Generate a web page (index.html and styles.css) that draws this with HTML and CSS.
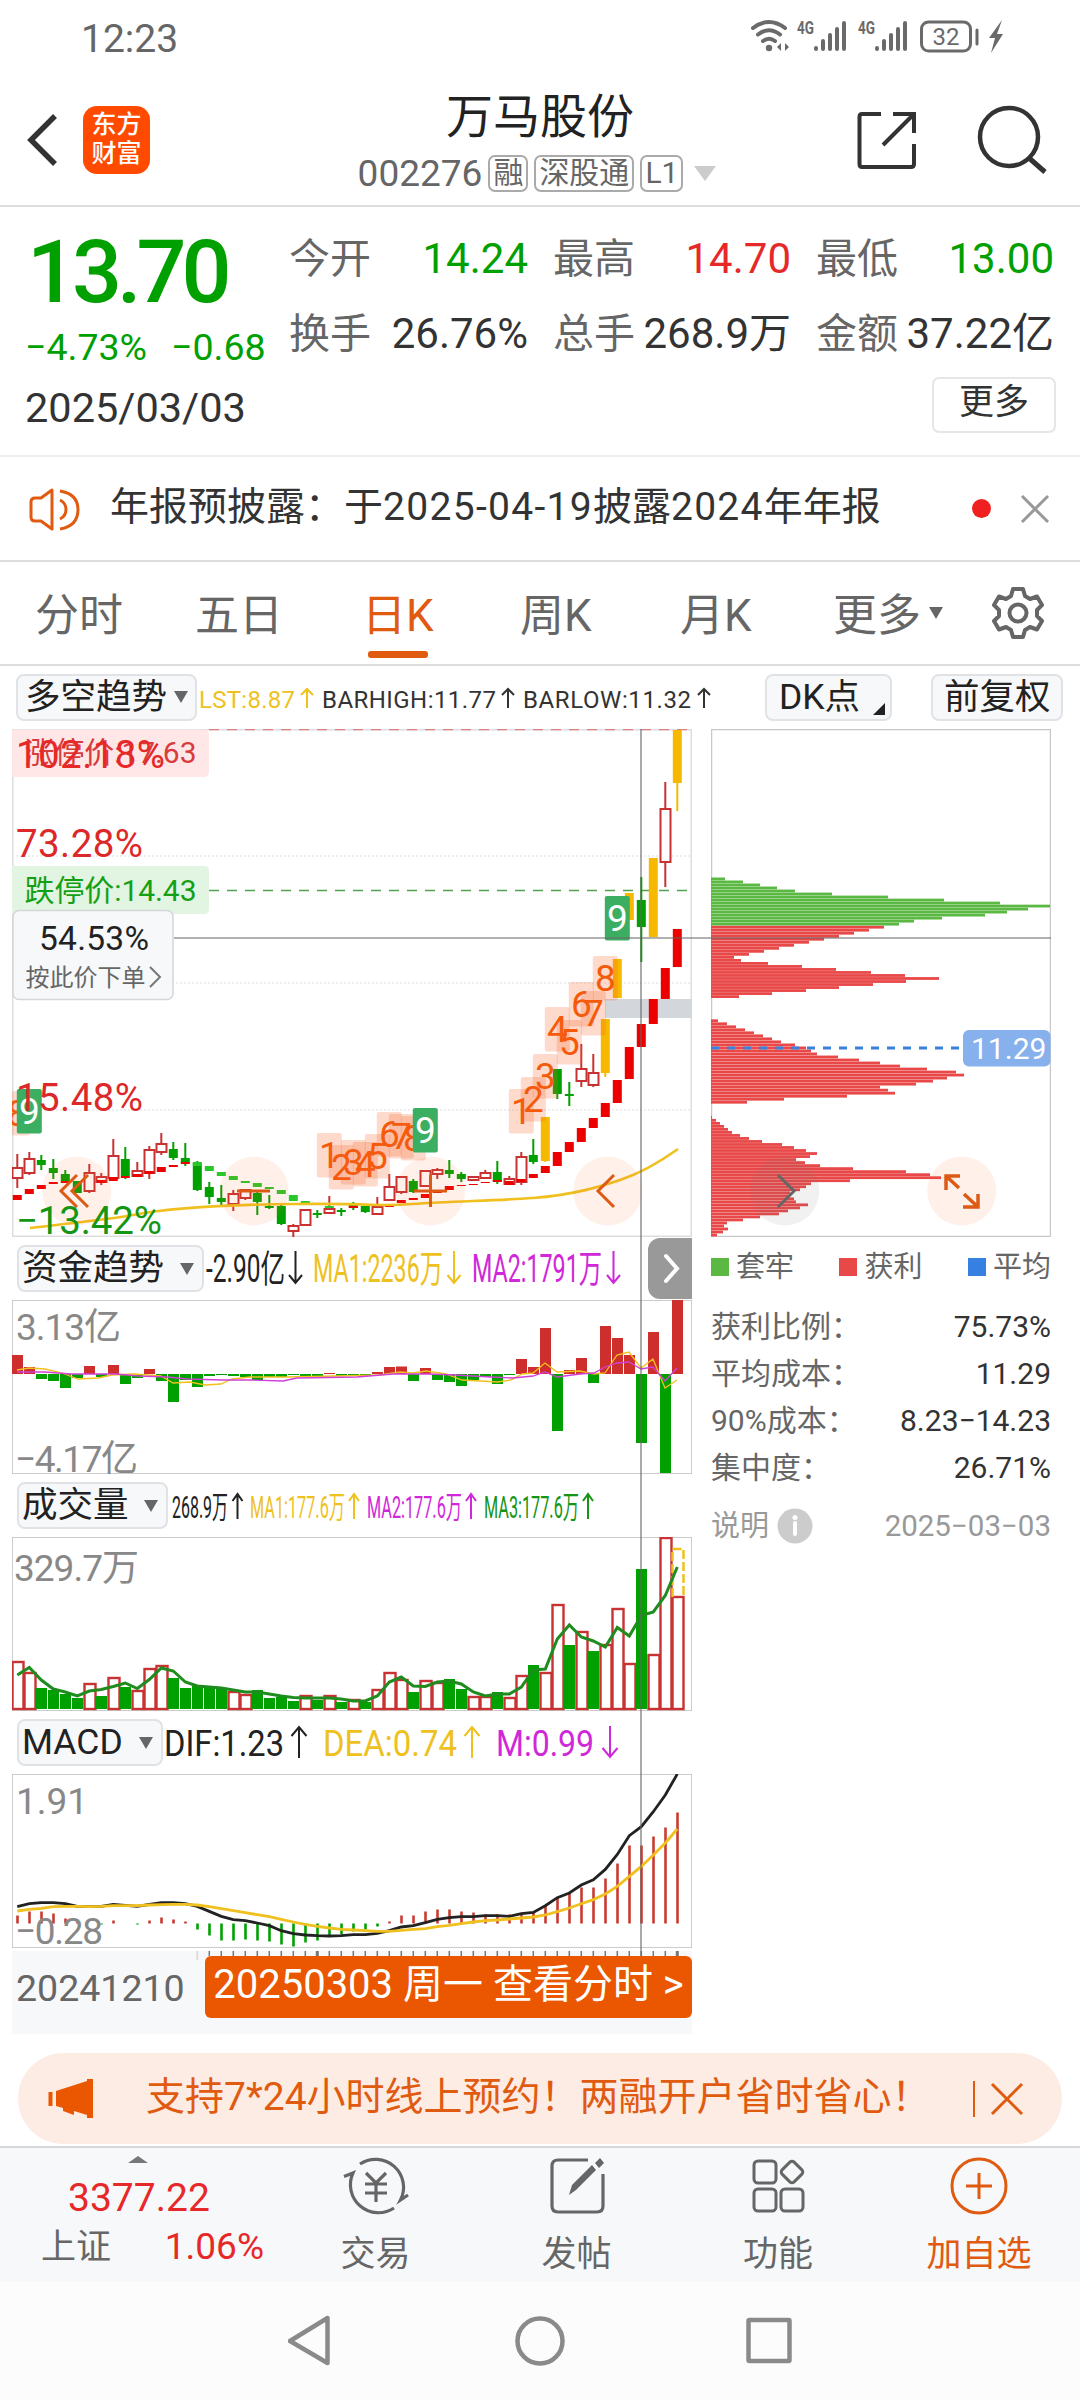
FILE: index.html
```html
<!DOCTYPE html>
<html lang="zh-CN">

<head>
    <meta charset="UTF-8">
    <meta name="viewport" content="width=device-width, initial-scale=1.0">
    <title>万马股份 002276</title>
    <link rel="stylesheet" href="styles.css">
</head>

<body>
    <div class="status">
        <span class="clock">12:23</span>
        <svg class="status-icons" viewBox="748 16 260 44" width="260" height="44">
            <g fill="none" stroke="#6a6a6a" stroke-width="4" stroke-linecap="round">
                <path d="M753 28 Q769 16 785 28"/>
                <path d="M758 34.500 Q769 26 780 34.500"/>
                <path d="M763 41 Q769 36.500 775 41"/>
            </g>
            <circle cx="769" cy="48" r="3.200" fill="#6a6a6a"/>
            <path d="M781 43 v8 l-4 -4z M785 43 v8 l4 -4z" fill="#6a6a6a"/>
            <text x="797" y="34" class="net" textLength="17" lengthAdjust="spacingAndGlyphs">4G</text>
            <g stroke="#6a6a6a" stroke-width="4" stroke-linecap="round">
                <path d="M816 48v1M823 41v8M830 35v14M837 29v20M844 23v26"/>
                <path d="M877 48v1M884 41v8M891 35v14M898 29v20M905 23v26"/>
            </g>
            <text x="858" y="34" class="net" textLength="17" lengthAdjust="spacingAndGlyphs">4G</text>
            <rect x="921.500" y="22" width="49" height="29" rx="7" fill="none" stroke="#6a6a6a" stroke-width="3"/>
            <text x="946" y="45" class="batt" text-anchor="middle">32</text>
            <path d="M977 30v14" stroke="#6a6a6a" stroke-width="3" stroke-linecap="round"/>
            <path d="M1002 20 L989 38 H995 L991 53 L1003 34 H997Z" fill="#6a6a6a"/>
        </svg>
    </div>

    <header class="header">
        <div class="header-left">
            <svg width="36" height="60" viewBox="0 0 36 60"><path d="M31 6 L7 30 L31 54" fill="none" stroke="#333" stroke-width="5.500"/></svg>
            <div class="logo"><span>东方</span><span>财富</span></div>
        </div>
        <div class="title">
            <h1>万马股份</h1>
            <div class="code-row">
                <span class="code">002276</span>
                <span class="tag">融</span>
                <span class="tag">深股通</span>
                <span class="tag">L1</span>
                <i class="tri tri-light"></i>
            </div>
        </div>
        <svg class="header-right" width="200" height="80" viewBox="850 100 200 80">
            <g fill="none" stroke="#333" stroke-width="4">
                <path d="M881 113 H862 Q859.500 113 859.500 116 V163 Q859.500 166 862 166 H911 Q914 166 914 163 V143 M893 113 H914 V132 M914 113 L883 144"/>
                <circle cx="1009" cy="136" r="29" stroke-width="4.500"/>
                <path d="M1029 157 L1045 171" stroke-width="5"/>
            </g>
        </svg>
    </header>

    <section class="quote">
        <div class="quote-top">
            <div class="price-box">
                <div class="price">13.70</div>
                <div class="change"><span>−4.73%</span><span>−0.68</span></div>
            </div>
            <div class="stats">
                <div class="stat"><label>今开</label><b class="down">14.24</b></div>
                <div class="stat"><label>最高</label><b class="up">14.70</b></div>
                <div class="stat"><label>最低</label><b class="down">13.00</b></div>
                <div class="stat"><label>换手</label><b>26.76%</b></div>
                <div class="stat"><label>总手</label><b>268.9万</b></div>
                <div class="stat"><label>金额</label><b>37.22亿</b></div>
            </div>
        </div>
        <div class="quote-bottom">
            <span class="date">2025/03/03</span>
            <button class="more-btn">更多</button>
        </div>
    </section>

    <section class="notice">
        <svg width="56" height="50" viewBox="27 483 56 50">
            <g fill="none" stroke="#e05a10" stroke-width="3" stroke-linejoin="round">
                <path d="M52 489 L41 497 H35 Q31 497 31 501 V516 Q31 520 35 520 H41 L52 528Z"/>
                <path d="M60 499 Q66 502 66 508.500 Q66 515 60 518"/>
                <path d="M60 490 Q78 493 78 508.500 Q78 525 60 528"/>
            </g>
        </svg>
        <p>年报预披露：于<span class="digits">2025-04-19</span>披露<span class="digits">2024</span>年年报</p>
        <i class="dot"></i>
        <svg width="32" height="32" viewBox="0 0 32 32"><path d="M3 3 L29 29 M29 3 L3 29" stroke="#999" stroke-width="3"/></svg>
    </section>

    <nav class="tabs">
        <a>分时</a>
        <a>五日</a>
        <a class="active">日K</a>
        <a>周K</a>
        <a>月K</a>
        <a>更多<i class="tri tri-small"></i></a>
        <svg width="56" height="56" viewBox="-28 -28 56 56">
            <g fill="none" stroke="#666" stroke-width="4" stroke-linejoin="round">
                <path d="M-5 -24 H5 L7 -17 L12 -14 L19 -16.500 L24 -8 L19 -3 V3 L24 8 L19 16.500 L12 14 L7 17 L5 24 H-5 L-7 17 L-12 14 L-19 16.500 L-24 8 L-19 3 V-3 L-24 -8 L-19 -16.500 L-12 -14 L-7 -17Z"/>
                <circle r="8.500"/>
            </g>
        </svg>
    </nav>

    <main class="board">
        <div class="row row-top">
            <button class="pick pick-main">多空趋势<i class="tri tri-small"></i></button>
            <svg class="readout" width="560" height="60" viewBox="197 0 560 60" font-size="24">
                <text x="199" y="41" fill="#eec11e" textLength="96">LST:8.87</text>
                <path d="M307 41V22M301 28l6-6 6 6" stroke="#eec11e"/>
                <text x="322" y="41" fill="#333" textLength="174">BARHIGH:11.77</text>
                <path d="M508 41V22M502 28l6-6 6 6" stroke="#333"/>
                <text x="523" y="41" fill="#333" textLength="168">BARLOW:11.32</text>
                <path d="M704 41V22M698 28l6-6 6 6" stroke="#333"/>
            </svg>
            <button class="pick pick-dk">DK点<i class="corner"></i></button>
            <button class="pick pick-fq">前复权</button>
        </div>

        <div class="columns">
            <div class="left">
                <svg id="kline" width="680" height="508" viewBox="0 0 680 508"></svg>

                <div class="row">
                    <button class="pick pick-fund">资金趋势<i class="tri"></i></button>
                    <svg class="readout" width="444" height="63" viewBox="204 0 444 63" font-size="38">
                        <text x="206" y="45" fill="#222" textLength="79" lengthAdjust="spacingAndGlyphs">-2.90亿</text>
                        <path d="M295.500 14V46M289 38l6.500 8 6.500-8" stroke="#222"/>
                        <text x="313" y="45" fill="#eec11e" textLength="130" lengthAdjust="spacingAndGlyphs">MA1:2236万</text>
                        <path d="M454 14V46M447.500 38l6.500 8 6.500-8" stroke="#eec11e"/>
                        <text x="472" y="45" fill="#d028d8" textLength="130" lengthAdjust="spacingAndGlyphs">MA2:1791万</text>
                        <path d="M613.500 14V46M607 38l6.500 8 6.500-8" stroke="#d028d8"/>
                    </svg>
                    <button class="expand"><svg width="20" height="32" viewBox="0 0 20 32"><path d="M6 3 L17 15.500 L6 28" fill="none" stroke="#fff" stroke-width="4" stroke-linecap="round"/></svg></button>
                </div>
                <svg id="fund" width="680" height="174" viewBox="0 0 680 174"></svg>

                <div class="row">
                    <button class="pick pick-vol">成交量<i class="tri"></i></button>
                    <svg class="readout" width="430" height="63" viewBox="168 0 430 63" font-size="31">
                        <text x="172" y="44" fill="#222" textLength="56" lengthAdjust="spacingAndGlyphs">268.9万</text>
                        <path d="M237.500 45V20M232.500 27l5-7 5 7" stroke="#222"/>
                        <text x="250" y="44" fill="#eec11e" textLength="95" lengthAdjust="spacingAndGlyphs">MA1:177.6万</text>
                        <path d="M354 45V20M349 27l5-7 5 7" stroke="#eec11e"/>
                        <text x="367" y="44" fill="#d028d8" textLength="95" lengthAdjust="spacingAndGlyphs">MA2:177.6万</text>
                        <path d="M471 45V20M466 27l5-7 5 7" stroke="#d028d8"/>
                        <text x="484" y="44" fill="#159415" textLength="95" lengthAdjust="spacingAndGlyphs">MA3:177.6万</text>
                        <path d="M588 45V20M583 27l5-7 5 7" stroke="#159415"/>
                    </svg>
                </div>
                <svg id="volume" width="680" height="174" viewBox="0 0 680 174"></svg>

                <div class="row">
                    <button class="pick pick-macd">MACD<i class="tri"></i></button>
                    <svg class="readout" width="470" height="63" viewBox="163 0 470 63" font-size="37">
                        <text x="164" y="45" fill="#222" textLength="120" lengthAdjust="spacingAndGlyphs">DIF:1.23</text>
                        <path d="M299 47V16M291.500 25l7.500-9 7.500 9" stroke="#222"/>
                        <text x="323" y="45" fill="#eec11e" textLength="134" lengthAdjust="spacingAndGlyphs">DEA:0.74</text>
                        <path d="M472 47V16M464.500 25l7.500-9 7.500 9" stroke="#eec11e"/>
                        <text x="496" y="45" fill="#d028d8" textLength="98" lengthAdjust="spacingAndGlyphs">M:0.99</text>
                        <path d="M610 15V46M602.500 37l7.500 9 7.500-9" stroke="#d028d8"/>
                    </svg>
                </div>
                <svg id="macd" width="680" height="174" viewBox="0 0 680 174"></svg>

                <div class="axis">
                    <svg id="ticks" width="680" height="10" viewBox="0 0 680 10"></svg>
                    <span class="start">20241210</span>
                    <button class="goto">20250303 周一 查看分时 &gt;</button>
                </div>
            </div>

            <aside class="right">
                <svg id="chips" width="340" height="508" viewBox="0 0 340 508"></svg>
                <div class="legend">
                    <span><i class="sq sq-green"></i>套牢</span>
                    <span><i class="sq sq-red"></i>获利</span>
                    <span><i class="sq sq-blue"></i>平均</span>
                </div>
                <dl class="cost">
                    <div><dt>获利比例：</dt><dd>75.73%</dd></div>
                    <div><dt>平均成本：</dt><dd>11.29</dd></div>
                    <div><dt>90%成本：</dt><dd>8.23−14.23</dd></div>
                    <div><dt>集中度：</dt><dd>26.71%</dd></div>
                </dl>
                <div class="explain">
                    <span>说明</span>
                    <svg width="36" height="36" viewBox="0 0 36 36">
                        <circle cx="18" cy="18" r="17.500" fill="#ccc"/>
                        <path d="M18 15v11" stroke="#fff" stroke-width="4" stroke-linecap="round"/>
                        <circle cx="18" cy="9.500" r="2.500" fill="#fff"/>
                    </svg>
                    <span class="explain-date">2025−03−03</span>
                </div>
            </aside>
        </div>

        <div class="cross-v"></div>
        <div class="cross-h"></div>
    </main>

    <div class="promo">
        <svg width="50" height="44" viewBox="46 2076 50 44">
            <path d="M50.500 2091v14" stroke="#eb5600" stroke-width="4"/>
            <path d="M56 2090 L87 2080 V2078 H93 V2117 H87 V2114 L74 2110 V2114 L63 2110 V2107 L56 2105Z" fill="#eb5600"/>
        </svg>
        <p>支持7*24小时线上预约！两融开户省时省心！</p>
        <i class="bar"></i>
        <svg width="34" height="34" viewBox="0 0 34 34"><path d="M2 2 L32 32 M32 2 L2 32" stroke="#e05a10" stroke-width="3"/></svg>
    </div>

    <footer class="bottom">
        <div class="index">
            <i class="tri-up"></i>
            <div class="index-num">3377.22</div>
            <div class="index-row"><span>上证</span><b>1.06%</b></div>
        </div>
        <a class="item">
            <svg width="66" height="62" viewBox="-33 -31 66 62">
                <g fill="none" stroke="#666" stroke-width="3.200">
                    <path d="M-16 -22 A28 28 0 0 1 24.500 14 L32 9"/>
                    <path d="M18 22 A28 28 0 0 1 -23 -13 L-32 -9.500"/>
                    <path d="M-10 -13 L0 -3 L10 -13 M0 -3 V16 M-11 -2 H11 M-11 7 H11"/>
                </g>
            </svg>
            <span>交易</span>
        </a>
        <a class="item">
            <svg width="66" height="62" viewBox="-33 -31 66 62">
                <path d="M11 -26 H-19 Q-25 -26 -25 -20 V20 Q-25 26 -19 26 H20 Q26 26 26 20 V-12" fill="none" stroke="#666" stroke-width="3.200"/>
                <path d="M-8 9 L-5 -1 L15 -21 L19 -16 L-1 4Z M18 -23 L23 -28 L27 -23 L22 -18Z" fill="#666"/>
            </svg>
            <span>发帖</span>
        </a>
        <a class="item">
            <svg width="66" height="62" viewBox="-33 -31 66 62">
                <g fill="none" stroke="#666" stroke-width="3">
                    <rect x="-24" y="-25" width="22" height="22" rx="4"/>
                    <rect x="-24" y="3" width="22" height="22" rx="4"/>
                    <rect x="3" y="3" width="22" height="22" rx="4"/>
                    <rect x="5.500" y="-22.500" width="17" height="17" rx="3" transform="rotate(45 14 -14)"/>
                </g>
            </svg>
            <span>功能</span>
        </a>
        <a class="item hot">
            <svg width="66" height="62" viewBox="-33 -31 66 62">
                <g fill="none" stroke="#e05a10" stroke-width="3">
                    <circle r="27"/>
                    <path d="M-13 0H13M0 -13V13"/>
                </g>
            </svg>
            <span>加自选</span>
        </a>
    </footer>

    <div class="sysnav">
        <svg width="504" height="60" viewBox="288 2311 504 60">
            <g fill="none" stroke="#8a8a8a" stroke-width="4.500" stroke-linejoin="round">
                <path d="M327.500 2318 V2363 L290 2341Z"/>
                <circle cx="540" cy="2341" r="22.500"/>
                <rect x="748.500" y="2320" width="41" height="41" rx="1"/>
            </g>
        </svg>
    </div>

    <script src="script.js"></script>
</body>

</html>
```

FILE: styles.css
```css
* {
    box-sizing: border-box;
}

body {
    width: 1080px;
    height: 2400px;
    margin: 0;
    background: #fff;
    color: #333;
    font-family: Roboto, "Noto Sans CJK SC", sans-serif;
    overflow: hidden;
}

svg {
    display: block;
    flex: none;
}

button {
    font-family: inherit;
    padding: 0;
    margin: 0;
}

b, h1 {
    font-weight: 400;
}

i {
    display: block;
    flex: none;
}

p, dl, dd, h1 {
    margin: 0;
}

/* status bar */
.status {
    height: 76px;
    padding: 0 72px 0 81px;
    display: flex;
    justify-content: space-between;
    align-items: center;
}

.clock {
    font-size: 39px;
    line-height: 76px;
    color: #666;
    padding-top: 1px;
}

.net {
    font-size: 18px;
    font-weight: 700;
    fill: #6a6a6a;
}

.batt {
    font-size: 24px;
    fill: #6a6a6a;
}

/* header */
.header {
    height: 131px;
    border-bottom: 2px solid #ddd;
    display: grid;
    grid-template-columns: 230px 1fr 230px;
    align-items: center;
}

.header-left {
    display: flex;
    align-items: center;
    gap: 23px;
    padding: 0 0 1px 24px;
}

.logo {
    width: 67px;
    height: 68px;
    border-radius: 14px;
    background: #ff4a00;
    color: #fff;
    display: flex;
    flex-direction: column;
    align-items: center;
    justify-content: center;
    font-size: 25px;
    font-weight: 500;
    line-height: 29px;
    padding-bottom: 2px;
}

.title {
    padding-top: 4px;
}

.title h1 {
    font-size: 47px;
    line-height: 62px;
    text-align: center;
    color: #222;
}

.code-row {
    display: flex;
    align-items: center;
    justify-content: center;
    gap: 6px;
    height: 52px;
    padding-right: 6px;
}

.code {
    font-size: 37px;
    color: #666;
    line-height: 40px;
}

.tag {
    height: 37px;
    border: 2px solid #aaa;
    border-radius: 7px;
    padding: 0 3px;
    font-size: 30px;
    line-height: 32px;
    color: #666;
}

.tri {
    width: 0;
    height: 0;
    border: 7.5px solid transparent;
    border-top: 12px solid #666;
    border-bottom: 0;
}

.tri-light {
    border-width: 15px 11px 0;
    border-top-color: #ccc;
    margin-left: 5px;
}

/* quote */
.quote {
    height: 250px;
    border-bottom: 2px solid #eee;
    padding: 14px 24px 0 25px;
}

.quote-top {
    display: flex;
}

.price-box {
    width: 264px;
    color: #00a000;
}

.price {
    font-size: 88px;
    font-weight: 500;
    line-height: 102px;
    letter-spacing: -5px;
    padding-left: 2px;
}

.change {
    display: flex;
    gap: 24px;
    font-size: 37.5px;
    line-height: 48px;
    white-space: nowrap;
}

.stats {
    flex: 1;
    display: grid;
    grid-template-columns: 239px 238px 238px;
    column-gap: 25px;
}

.stat {
    display: flex;
    justify-content: space-between;
    align-items: baseline;
    height: 75px;
    line-height: 75px;
    font-size: 42px;
    white-space: nowrap;
}

.stat label {
    font-size: 41px;
    color: #666;
}

.down {
    color: #00a000;
}

.up {
    color: #e62828;
}

.quote-bottom {
    display: flex;
    justify-content: space-between;
    align-items: center;
    margin-top: 4px;
    height: 60px;
}

.date {
    font-size: 41.5px;
    line-height: 50px;
    padding-top: 6px;
}

.more-btn {
    width: 124px;
    height: 56px;
    border: 2px solid #e6e6e6;
    border-radius: 7px;
    background: #fff;
    font-size: 35px;
    line-height: 48px;
    padding-bottom: 4px;
    color: #333;
}

/* notice */
.notice {
    height: 105px;
    border-bottom: 2px solid #ddd;
    padding: 0 28px 0 27px;
    display: flex;
    align-items: center;
}

.notice p {
    width: 859px;
    padding-left: 27px;
    font-size: 39px;
    line-height: 60px;
    padding-bottom: 3px;
    white-space: nowrap;
}

.digits {
    letter-spacing: 1.3px;
}

.dot {
    width: 19px;
    height: 19px;
    border-radius: 50%;
    background: #f02020;
    margin: 0 28px 0 30px;
}

/* tabs */
.tabs {
    height: 104px;
    border-bottom: 2px solid #ddd;
    padding-left: 35px;
    display: grid;
    grid-template-columns: 160px 167px 158px 160px 153px 157px 56px;
    align-items: center;
}

.tabs a {
    display: flex;
    align-items: center;
    font-size: 44px;
    line-height: 96px;
    padding-top: 6px;
    color: #666;
    white-space: nowrap;
    position: relative;
}

.tabs .active {
    color: #e05a10;
}

.tabs .active::after {
    content: "";
    position: absolute;
    left: 6px;
    bottom: 6px;
    width: 60px;
    height: 7px;
    border-radius: 3px;
    background: #e05a10;
}

.tri-small {
    margin-left: 8px;
}

.tabs .tri-small {
    margin-bottom: 6px;
}

/* board */
.board {
    height: 1384px;
    position: relative;
}

.row {
    display: flex;
    align-items: center;
    height: 63px;
    padding-left: 5px;
}

.row-top {
    padding: 0 16px 1px;
}

.pick {
    height: 47px;
    border: 2px solid #e0e2e6;
    border-radius: 8px;
    background: #f7f8fa;
    color: #222;
    font-size: 35.5px;
    line-height: 43px;
    flex: none;
    display: flex;
    align-items: center;
    justify-content: space-between;
    padding: 0 8px 0 3px;
    white-space: nowrap;
}

.pick-main {
    width: 181px;
    padding: 0 7px 0 7px;
}

.pick-main .tri-small {
    margin-left: 0;
}

.pick-dk {
    width: 127px;
    margin-left: 8px;
    padding: 0 5px 0 12px;
}

.pick-fq {
    width: 132px;
    margin-left: 39px;
    padding: 0 0 0 11px;
}

.pick-fund {
    width: 187px;
}

.pick-vol {
    width: 151px;
}

.pick-macd {
    width: 146px;
}

.corner {
    border: 6px solid #222;
    border-top-color: transparent;
    border-left-color: transparent;
    align-self: flex-end;
    margin-bottom: 4px;
}

.readout path {
    fill: none;
    stroke-width: 2;
}

.expand {
    width: 44px;
    height: 61px;
    border: 0;
    border-radius: 12px 0 0 12px;
    background: #999;
    display: flex;
    align-items: center;
    justify-content: center;
}

.columns {
    display: flex;
    padding-left: 12px;
}

.left {
    width: 680px;
    margin-right: 19px;
}

.right {
    width: 340px;
}

/* svg labels */
.pct {
    font-size: 38.500px;
}

.scale {
    font-size: 37px;
    fill: #888;
}

.mark {
    font-size: 37px;
    text-anchor: middle;
}

.limit {
    font-size: 30px;
}

.axis {
    position: relative;
    margin-top: 3px;
    height: 83px;
    background: #f7f8fa;
    display: flex;
    justify-content: space-between;
    padding-top: 5px;
}

#ticks {
    position: absolute;
    left: 0;
    top: 0;
}

.start {
    font-size: 37.5px;
    line-height: 64px;
    color: #666;
    padding-left: 4px;
}

.goto {
    width: 487px;
    height: 62px;
    border: 0;
    border-radius: 6px;
    background: #eb5600;
    color: #fff;
    font-size: 40px;
    line-height: 58px;
    padding-bottom: 4px;
    white-space: nowrap;
    position: relative;
}

.legend {
    display: flex;
    justify-content: space-between;
    height: 60px;
    align-items: center;
    font-size: 29px;
    line-height: 58px;
    color: #666;
}

.legend span {
    display: flex;
    align-items: center;
    gap: 7px;
}

.sq {
    width: 18px;
    height: 18px;
}

.sq-green {
    background: #5bb943;
}

.sq-red {
    background: #e94848;
}

.sq-blue {
    background: #3580e0;
}

.cost {
    padding-top: 6px;
    font-size: 30px;
}

.cost div {
    display: flex;
    justify-content: space-between;
    line-height: 47px;
    height: 47px;
}

.cost dt {
    color: #666;
}

.explain {
    display: flex;
    align-items: center;
    height: 60px;
    margin-top: 5px;
    font-size: 29px;
    line-height: 58px;
    color: #999;
}

.explain svg {
    margin-left: 8px;
}

.explain-date {
    margin-left: auto;
    font-size: 29.5px;
}

.cross-v {
    position: absolute;
    left: 640px;
    top: 63px;
    width: 2px;
    height: 1227px;
    background: rgba(100, 100, 100, 0.55);
}

.cross-h {
    position: absolute;
    left: 174px;
    top: 271px;
    width: 877px;
    height: 2px;
    background: rgba(100, 100, 100, 0.5);
}

/* promo */
.promo {
    width: 1044px;
    height: 91px;
    margin: 3px 18px 2px;
    border-radius: 46px;
    background: #fdece3;
    color: #e05a10;
    display: flex;
    align-items: center;
    padding: 0 38px 0 28px;
}

.promo p {
    flex: 1;
    padding: 0 0 4px 50px;
    font-size: 39px;
    line-height: 60px;
    white-space: nowrap;
}

.promo .bar {
    width: 2px;
    height: 36px;
    background: #e05a10;
    margin-right: 15px;
}

/* bottom bar */
.bottom {
    height: 136px;
    border-top: 2px solid #d5d7da;
    background: #f7f8fa;
    display: grid;
    grid-template-columns: 275px 201px 201px 202px 200px;
}

.index {
    color: #e62828;
}

.tri-up {
    width: 20px;
    border: 10px solid transparent;
    border-bottom: 7px solid #777;
    border-top: 0;
    margin: 8px 0 0 128px;
}

.index-num {
    font-size: 39px;
    line-height: 56px;
    padding: 7px 0 0 68px;
}

.index-row {
    display: flex;
    justify-content: space-between;
    align-items: baseline;
    padding: 0 11px 0 41px;
    line-height: 42px;
    font-size: 37px;
}

.index-row span {
    font-size: 35px;
    color: #666;
}

.item {
    display: flex;
    flex-direction: column;
    align-items: center;
    padding-top: 7px;
    font-size: 35px;
    line-height: 46px;
    color: #666;
}

.item span {
    margin-top: 15px;
}

.hot {
    color: #e05a10;
}

.sysnav {
    height: 118px;
    background: #fcfcfc;
    display: flex;
    align-items: center;
    justify-content: center;
}
```

FILE: script.js
```js
const RED = '#c83232';
const GREEN = '#00a000';
const YELLOW = '#f7b900';
const STEP = 12;

// type, high, body top, body bottom, low
const candles = [
    ['r', 425, 439, 449, 459], ['r', 423, 430, 444, 446], ['g', 426, 431, 436, 441], ['g', 430, 439, 444, 450],
    ['g', 441, 445, 452, 452], ['g', 452, 452, 464, 464], ['r', 435, 444, 462, 464], ['r', 444, 448, 453, 456],
    ['r', 410, 427, 449, 451], ['g', 418, 430, 447, 450], ['r', 433, 442, 447, 448], ['r', 417, 421, 444, 450],
    ['r', 404, 415, 423, 426], ['g', 413, 420, 429, 431], ['g', 414, 429, 434, 437], ['g', 432, 434, 461, 462],
    ['g', 453, 458, 468, 475], ['g', 456, 469, 473, 478], ['r', 461, 465, 475, 482], ['r', 460, 461, 469, 471],
    ['g', 461, 464, 473, 486], ['g', 466, 477, 479, 480], ['g', 476, 477, 495, 496], ['r', 495, 497, 502, 508],
    ['r', 480, 481, 496, 497], ['g', 481, 484, 486, 489], ['r', 467, 480, 484, 485], ['g', 479, 481, 483, 487],
    ['g', 473, 476, 479, 481], ['g', 477, 477, 483, 484], ['r', 468, 478, 485, 486], ['r', 445, 458, 471, 472],
    ['r', 447, 448, 463, 465], ['g', 450, 452, 463, 464], ['r', 441, 442, 457, 458], ['r', 439, 441, 445, 450],
    ['g', 431, 441, 445, 449], ['g', 443, 445, 450, 453], ['r', 447, 448, 451, 452], ['r', 441, 444, 449, 450],
    ['g', 432, 443, 453, 455], ['r', 447, 450, 455, 456], ['r', 423, 428, 453, 456], ['g', 410, 426, 433, 435],
    ['y', 388, 388, 432, 433], ['g', 340, 340, 365, 370], ['g', 353, 365, 367, 377], ['r', 315, 340, 352, 358],
    ['r', 325, 344, 356, 358], ['y', 290, 290, 344, 348], ['y', 230, 230, 269, 269], ['y', 164, 164, 191, 191],
    ['g', 148, 171, 198, 233], ['y', 129, 129, 208, 208], ['r', 53, 80, 133, 158], ['y', 1, 1, 54, 82]
];

// index, top, bottom
const redBars = [
    [0, 466, 471], [1, 460, 465], [2, 456, 460], [3, 453, 455], [4, 452, 454], [7, 451, 454], [8, 448, 452],
    [9, 447, 449], [10, 445, 448], [11, 442, 445], [12, 438, 443], [13, 436, 438], [14, 433, 435], [28, 477, 479],
    [31, 476, 478], [32, 471, 474], [33, 469, 471], [34, 465, 469], [35, 462, 464], [36, 457, 461], [37, 456, 457],
    [38, 455, 456], [39, 453, 454], [40, 451, 453], [41, 452, 456], [42, 450, 453], [43, 445, 449], [44, 437, 444],
    [45, 423, 437], [46, 413, 423], [47, 399, 413], [48, 389, 399], [49, 374, 388], [50, 351, 374], [51, 318, 350],
    [52, 295, 318], [53, 270, 295], [54, 239, 270], [55, 200, 238]
];
const greenBars = [
    [15, 433, 437], [16, 437, 442], [17, 443, 447], [18, 447, 451], [19, 452, 454], [20, 454, 458], [21, 458, 460],
    [22, 461, 465], [23, 466, 472], [24, 472, 475], [26, 477, 479]
];

// index, top, digit
const marks = [
    [0, 362, 8], [26, 404, 1], [27, 416, 2], [28, 411, 3], [29, 413, 4], [30, 405, 5], [31, 383, 6], [32, 385, 7],
    [33, 387, 8], [42, 360, 1], [43, 348, 2], [44, 325, 3], [45, 278, 4], [46, 291, 5], [47, 253, 6], [48, 262, 7],
    [49, 227, 8], [1, 360, 9], [34, 379, 9], [50, 167, 9]
];

const fund = [
    19, 7, -5, -7, -14, -4, 8, -3, 9, -10, -4, 5, -7, -28, -6, -13, -2, -1, -2, -3, -6, -3, -3, -1, -3, -2, 1, -2,
    -2, -2, 2, 7, 7.5, -7, 6, -6, -8, -12, -6, -3, -10, -1, 15, 7, 46, -57, 4, 16, -9, 48, 36, 19, -69, 42, -99, 74
];

const volume = [
    'r47', 'r36', 'g21', 'g19', 'g15', 'g11', 'r25', 'g13', 'r31', 'g22', 'r18', 'r40', 'r43', 'g31', 'g21', 'g23',
    'g21', 'g20', 'r17', 'r14', 'g19', 'g11', 'g12', 'g8', 'r13', 'g9', 'r13', 'g7', 'r9', 'g7', 'r19', 'r36',
    'r29', 'g17', 'r28', 'r26', 'g30', 'g20', 'r12', 'r12', 'g17', 'r11', 'r33', 'g44', 'r36', 'r104', 'g64', 'r77',
    'g58', 'r64', 'r100', 'r45', 'g140', 'r54', 'r171', 'r112'
];
const volumeMa = [
    138, 130.5, 143, 152, 155, 159, 154, 152.5, 149.5, 146, 151.5, 142.5, 131, 134, 145, 149, 150, 151, 153, 155,
    155, 157, 159, 160.5, 161, 161, 161, 162, 164, 164, 159, 145, 140, 149, 149.5, 145, 144, 147, 155, 159, 157,
    157, 150, 133, 132, 102, 88, 100, 104, 110, 90.5, 99, 78.5, 75, 58.5, 30
];

const hist = [
    8, 12, 12, 10, 5, 2, 0, -1, 3, 0, -1, 3, 6, 4, 2, -6, -12, -17, -17, -16, -17, -18, -21, -23, -19, -17, -12,
    -11, -8, -6, -3, 2, 8, 8, 12, 14, 14, 12, 11, 9, 9, 9, 9, 11, 18, 26, 30, 36, 36, 45, 60, 78, 78, 87, 96, 111
];
const dif = [
    132.7, 129.7, 128.7, 128.7, 129.7, 132.4, 132.7, 132.4, 130.4, 131.4, 132.4, 130.4, 128.7, 128.7, 129.7, 132.4,
    137.4, 142.4, 145.7, 146.7, 149, 151.7, 156.7, 159.7, 161, 161.7, 162, 161.7, 160.7, 160.7, 159.4, 156.7, 153,
    151.7, 148.7, 145.4, 143.7, 142.7, 142.7, 141.7, 141.7, 142.4, 139.7, 138.4, 131.7, 123.7, 119, 111, 105.7,
    95.4, 80.4, 61.7, 52.7, 37.7, 21, 0
];
const dea = [
    137, 135.4, 134.4, 132.7, 132.4, 132.4, 132.7, 132.4, 131.7, 131.7, 131.7, 131, 130.7, 130.4, 130.4, 131, 132.7,
    134.7, 136.7, 138.7, 140.7, 142.7, 145.4, 148, 150.4, 152.4, 154, 155.4, 156, 156.7, 157.4, 157.4, 156.4, 155.4,
    154.7, 152.7, 151.4, 149.7, 148, 146.7, 146, 145, 144, 143, 141, 137.7, 134, 129.7, 125.7, 120, 112.4, 102.4,
    92.4, 81, 69, 55
];

// one row per price level, top to bottom
const chips = [
    14, 32, 49, 66, 84, 121, 177, 233, 289, 339, 317, 296, 274, 231, 203, 188,
    173, 158, 143, 128, 113, 98, 83, 68, 53, 38, 23, 30, 57, 91, 125, 160, 194, 228, 195, 162, 128, 95, 61, 28,
    0, 0, 0, 0, 0, 0, 0,
    7, 16, 25, 34, 43, 52, 61, 70, 84, 95, 100, 106, 127, 148, 169, 189, 216, 245, 253, 236, 222, 205, 169, 177,
    184, 136, 73, 36,
    0, 0, 0, 0,
    1, 5, 9, 13, 17, 21, 29, 38, 51, 71, 83, 95, 106, 99, 85, 94, 109, 142, 195, 219, 230, 139, 100, 95, 89, 79,
    77, 83, 85, 97, 89, 77, 68, 49, 32, 16, 13, 17, 12, 6
];

const cx = i => 5.3 + i * STEP;
const rect = (x, y, w, h, attrs) => `<rect x="${x}" y="${y}" width="${w}" height="${h}" ${attrs}/>`;
const line = (x1, y1, x2, y2, attrs) => `<line x1="${x1}" y1="${y1}" x2="${x2}" y2="${y2}" ${attrs}/>`;
const series = (ys, color, w) =>
    `<polyline points="${ys.map((y, i) => cx(i) + ',' + y).join(' ')}" fill="none" stroke="${color}" stroke-width="${w}"/>`;
const circle = (x, fill) => `<circle cx="${x}" cy="462" r="34.500" fill="${fill}"/>`;
const icon = (d, color) => `<path d="${d}" fill="none" stroke="${color}" stroke-width="3"/>`;

function drawKline() {
    let s = '';
    [127, 254, 381].forEach(y => s += line(0, y, 680, y, 'stroke="#ddd" stroke-dasharray="2 2"'));
    s += rect(0.5, 0.5, 679, 507, 'fill="none" stroke="#ddd" stroke-width="2"');
    s += line(197, 0.5, 675, 0.5, 'stroke="#d98080" stroke-width="1.5" stroke-dasharray="10 8"');
    s += line(197, 161.5, 675, 161.5, 'stroke="#4fa04f" stroke-width="1.5" stroke-dasharray="10 8"');
    s += rect(593, 270, 87, 19, 'fill="#d3d6db"');

    candles.forEach(([t, hi, top, bot, lo], i) => {
        const x = cx(i);
        const c = t === 'r' ? RED : t === 'g' ? GREEN : YELLOW;
        s += line(x, hi, x, top, `stroke="${c}" stroke-width="2"`);
        s += line(x, bot, x, lo, `stroke="${c}" stroke-width="2"`);
        if (t === 'r') {
            s += rect(x - 4.8, top, 10, Math.max(bot - top, 2), `fill="#fff" stroke="${c}" stroke-width="2"`);
        } else {
            s += rect(x - 4.5, top, 9, Math.max(bot - top, 2), `fill="${c}"`);
        }
    });
    redBars.forEach(([i, a, b]) => s += rect(cx(i) - 4.5, a, 9, b - a, 'fill="#ec0000"'));
    greenBars.forEach(([i, a, b]) => s += rect(cx(i) - 4.5, a, 9, b - a, 'fill="#28c828"'));

    s += '<path d="M18 499 C60 494 100 490 121 486 S190 476 281 475 S360 478 400 475 S480 472 521 469 S590 457 608 451 S645 435 666 420" fill="none" stroke="#f0c01e" stroke-width="2.700"/>';

    marks.forEach(([i, y, n]) => {
        const nine = n === 9;
        const left = Math.max(cx(i) - 12.5, 0);
        s += rect(left, y, cx(i) + 12.5 - left, 44.5, `rx="2" fill="${nine ? '#3cae62' : 'rgba(248,100,40,.24)'}"`);
        s += `<text x="${cx(i)}" y="${y + 35}" class="mark" fill="${nine ? '#fff' : '#f55a0a'}">${n}</text>`;
    });

    s += circle(64.7, 'rgba(255,110,40,.1)') + icon('M65 446 L49 462 L65 478 M76 446 L60 462 L76 478', '#dc5a14');
    s += circle(242, 'rgba(255,110,40,.1)') + icon('M225 462 H258', '#dc5a14');
    s += circle(418.7, 'rgba(255,110,40,.1)') + icon('M402 462 H435 M418.500 446 V478', '#dc5a14');
    s += circle(595.7, 'rgba(255,110,40,.1)') + icon('M602 446 L586 462 L602 478', '#dc5a14');

    s += '<path d="M0 0.500 H192 Q197 0.500 197 6 V42 Q197 48 192 48 H0Z" fill="rgba(255,228,228,.9)"/>';
    s += '<text x="12.500" y="34" class="limit" fill="#d83c3c" textLength="172">涨停价:17.63</text>';
    s += '<path d="M0 137 H192 Q197 137 197 142 V180 Q197 185 192 185 H0Z" fill="#e2f4e2"/>';
    s += '<text x="12.500" y="172" class="limit" fill="#14a014" textLength="172">跌停价:14.43</text>';
    s += '<text x="4" y="39" class="pct" fill="#e62828" textLength="149">102.18%</text>';
    s += '<text x="4" y="128" class="pct" fill="#dc2828" textLength="127">73.28%</text>';
    s += '<text x="4" y="382" class="pct" fill="#dc2828" textLength="127">15.48%</text>';
    s += '<text x="4" y="505" class="pct" fill="#149614" textLength="146">−13.42%</text>';

    s += rect(1, 181.5, 160, 89, 'rx="6" fill="#f7f8fa" stroke="#d4d6da" stroke-width="1.5"');
    s += '<text x="27" y="221" font-size="33.500" fill="#222" textLength="110">54.53%</text>';
    s += '<text x="13.500" y="257" font-size="24" fill="#666">按此价下单</text>';
    s += '<path d="M138 238 L148 248 L138 258" fill="none" stroke="#777" stroke-width="2"/>';
    document.getElementById('kline').innerHTML = s;
}

function drawFund() {
    let s = rect(0.5, 0.5, 679, 173, 'fill="none" stroke="#ccc"');
    s += '<text x="4" y="40" class="scale" textLength="105">3.13亿</text>';
    s += '<text x="3" y="172" class="scale" textLength="123">−4.17亿</text>';
    fund.forEach((v, i) => {
        s += rect(i * STEP, v > 0 ? 74 - v : 74, 11, Math.abs(v), `fill="${v > 0 ? '#cf2f2c' : GREEN}"`);
    });
    s += '<polyline fill="none" stroke="#f0c01e" stroke-width="1.300" points="5,70 17,68 33,69 50,73 66,79 86,78 100,75 122,74 149,76 161,83 178,82 193,85 209,84 220,79 238,77 274,77 323,76 367,75 388,72 401,73 414,71 434,74 450,80 486,82 499,80 510,74 521,73 533,63 545,72 568,71 582,74 593,73 605,55 617,52 629,68 641,59 653,88 665,80"/>';
    s += '<polyline fill="none" stroke="#d040d8" stroke-width="1.300" points="5,72 33,72 59,74 104,74 126,76 155,77 175,79 211,80 238,80 271,81 285,78 345,77 381,74 417,74 443,75 479,77 501,78 521,76 533,72 545,77 568,74 582,73 593,67 605,63 617,62 629,69 641,67 653,81 665,68"/>';
    document.getElementById('fund').innerHTML = s;
}

function drawVolume() {
    let s = rect(0.5, 0.5, 679, 173, 'fill="none" stroke="#ccc"');
    s += '<text x="2" y="44" class="scale" textLength="125">329.7万</text>';
    volume.forEach((item, i) => {
        const h = Number(item.slice(1));
        if (item[0] === 'g') {
            s += rect(i * STEP, 172 - h, 11, h, `fill="${GREEN}"`);
        } else {
            s += rect(i * STEP + 0.5, 172 - h, 11, h, `fill="#fff" stroke="${RED}" stroke-width="2.4"`);
        }
    });
    s += '<path d="M660.500 60 V12 H671.500 V60" fill="none" stroke="#f0c01e" stroke-width="2.500" stroke-dasharray="9 3"/>';
    s += series(volumeMa, '#1e8c1e', 3);
    document.getElementById('volume').innerHTML = s;
}

function drawMacd() {
    let s = rect(0.5, 0.5, 679, 173, 'fill="none" stroke="#ccc"');
    hist.forEach((v, i) => {
        s += line(cx(i) + 0.2, 149.5, cx(i) + 0.2, 149.5 - v, `stroke="${v > 0 ? '#c83a32' : GREEN}" stroke-width="2.6"`);
    });
    s += '<text x="4" y="40" class="scale">1.91</text>';
    s += '<text x="3" y="170" class="scale" textLength="88">−0.28</text>';
    s += series(dif, '#222', 2.8) + series(dea, '#f0c01e', 2.8);
    document.getElementById('macd').innerHTML = s;

    let t = line(cx(15), 0, cx(15), 9, 'stroke="#ddd" stroke-width="2"');
    for (let i = 16; i < 56; i++) {
        t += line(cx(i), 0, cx(i), 5, `stroke="#777" stroke-width="${i === 25 || i === 55 ? 3 : 1.5}"`);
    }
    document.getElementById('ticks').innerHTML = t;
}

function drawChips() {
    let s = rect(0.5, 0.5, 339, 507, 'fill="none" stroke="#c8c8c8" stroke-width="1.5"');
    chips.forEach((w, i) => {
        if (w) s += rect(0, (148.5 + i * 3.018).toFixed(2), w, 2.8, `fill="${i < 16 ? '#5bb943' : '#e94848'}"`);
    });
    s += line(0, 319, 248, 319, 'stroke="#3a80dc" stroke-width="3" stroke-dasharray="8 8"');
    s += rect(252, 301, 87.5, 36.5, 'rx="6" fill="#87b1ec"');
    s += '<text x="260" y="330" font-size="30" fill="#fff">11.29</text>';
    s += circle(73.7, 'rgba(120,120,120,.1)') + icon('M67 446 L83 462 L67 478', '#666');
    s += circle(250.7, 'rgba(255,110,40,.1)');
    s += '<path d="M235 461 V447 H249 M235 447 L248 459 M267 465 V478 H252 M267 478 L253 465" fill="none" stroke="#dc5a14" stroke-width="3.500"/>';
    document.getElementById('chips').innerHTML = s;
}

drawKline();
drawFund();
drawVolume();
drawMacd();
drawChips();
```
